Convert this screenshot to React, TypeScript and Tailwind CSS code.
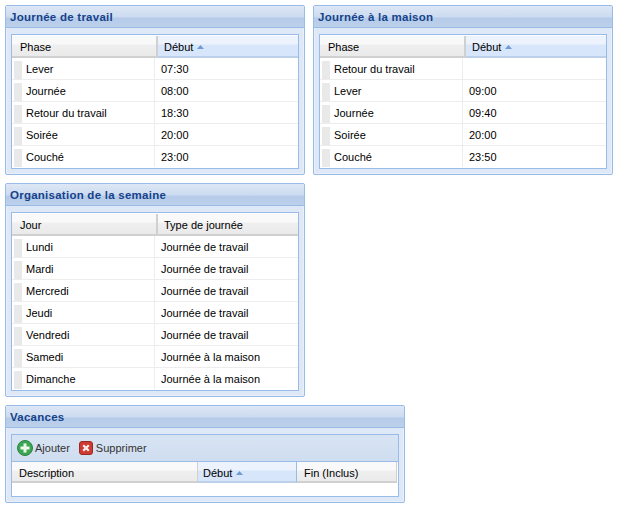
import type { ReactNode } from "react";

interface GridProps {
  head: string[];
  sorted?: number;
  rows: string[][];
}

function Panel({ title, width, children }: { title: string; width: string; children: ReactNode }) {
  return (
    <section className={`${width} rounded-[2px] border border-[#99bbe8] bg-[#dfe8f6] shadow-[inset_0_0_0_1px_#e9f0fb]`}>
      <div className="flex h-[22px] items-center border-b border-[#99bbe8] bg-[linear-gradient(#dde7f5_0px,#ccdbf0_11px,#b5cbe9_12px,#bdd1ec_22px)] pl-[4px] pt-[2px]">
        <h2 className="text-[11.5px] font-bold tracking-[0.25px] text-[#15428b]">{title}</h2>
      </div>
      <div className="p-[5px] pt-[6px]">{children}</div>
    </section>
  );
}

function HeaderCell({ label, active, className }: { label: string; active?: boolean; className: string }) {
  return (
    <div
      className={`flex items-center border-b-2 ${className} ${
        active
          ? "border-b-[#bcd0ea] bg-[linear-gradient(#edf3fd_0px,#edf3fd_8px,#d7e6fa_9px,#d7e6fa_22px)]"
          : "border-b-[#d0d0d0] bg-[linear-gradient(#f9f9f9_0px,#f9f9f9_8px,#efefef_9px,#e9e9e9_22px)]"
      }`}
    >
      <span>{label}</span>
      {active && (
        <svg width="7" height="4" viewBox="0 0 7 4" className="ml-[4px]">
          <path d="M3.5 0 7 4H0z" fill="#6f9bd2" />
        </svg>
      )}
    </div>
  );
}

function Grid({ head, sorted, rows }: GridProps) {
  return (
    <div className="border border-[#99bbe8] bg-white">
      <div className="flex border-t border-white">
        <HeaderCell label={head[0]} className="h-[22px] w-[146px] border-r-2 border-r-[#d0d0d0] pl-[8px] pt-[2px]" />
        <HeaderCell label={head[1]} active={sorted === 1} className="h-[22px] flex-1 pl-[6px] pt-[2px]" />
      </div>
      {rows.map((row) => (
        <div key={row[0]} className="flex h-[22px] border-b border-[#ededed] last:border-b-transparent">
          <div className="flex w-[143px] items-center border-r border-[#ededed] pl-[2px] pt-[2px]">
            <div className="h-[18px] w-[8px] bg-[#e9e9e9]" />
            <span className="ml-[4px]">{row[0]}</span>
          </div>
          <div className="flex items-center pl-[6px] pt-[2px]">{row[1]}</div>
        </div>
      ))}
    </div>
  );
}

function AddIcon() {
  return (
    <svg width="16" height="16" viewBox="0 0 16 16">
      <circle cx="8" cy="8" r="7.5" fill="#3ba651" stroke="#2d8043" />
      <path d="M6.5 3.5h3v3h3v3h-3v3h-3v-3h-3v-3h3z" fill="#eef8ee" />
    </svg>
  );
}

function DeleteIcon() {
  return (
    <svg width="14" height="14" viewBox="0 0 14 14">
      <rect x="0.5" y="0.5" width="13" height="13" rx="2.5" fill="#cf3a30" stroke="#992a22" />
      <path d="M4.2 4.2 9.8 9.8M9.8 4.2 4.2 9.8" stroke="#fdf1ef" strokeWidth="2.2" />
    </svg>
  );
}

const workday = [
  ["Lever", "07:30"],
  ["Journée", "08:00"],
  ["Retour du travail", "18:30"],
  ["Soirée", "20:00"],
  ["Couché", "23:00"],
];

const homeday = [
  ["Retour du travail", ""],
  ["Lever", "09:00"],
  ["Journée", "09:40"],
  ["Soirée", "20:00"],
  ["Couché", "23:50"],
];

const week = [
  ["Lundi", "Journée de travail"],
  ["Mardi", "Journée de travail"],
  ["Mercredi", "Journée de travail"],
  ["Jeudi", "Journée de travail"],
  ["Vendredi", "Journée de travail"],
  ["Samedi", "Journée à la maison"],
  ["Dimanche", "Journée à la maison"],
];

export default function App() {
  return (
    <div className="flex min-h-[508px] w-[620px] flex-col items-start gap-[8px] bg-white p-[5px] font-['Liberation_Sans',Arial,sans-serif] text-[11px] text-black">
      <div className="flex gap-[8px]">
        <Panel title="Journée de travail" width="w-[300px]">
          <Grid head={["Phase", "Début"]} sorted={1} rows={workday} />
        </Panel>
        <Panel title="Journée à la maison" width="w-[300px]">
          <Grid head={["Phase", "Début"]} sorted={1} rows={homeday} />
        </Panel>
      </div>
      <Panel title="Organisation de la semaine" width="w-[300px]">
        <Grid head={["Jour", "Type de journée"]} rows={week} />
      </Panel>
      <Panel title="Vacances" width="w-[400px]">
        <div className="border border-[#99bbe8] bg-white">
          <div className="flex h-[27px] items-center gap-[9px] border-b border-[#99bbe8] bg-[linear-gradient(#d8e4f3,#cfddf0)] pl-[5px] text-[#333]">
            <div className="flex items-center gap-[2px]">
              <AddIcon />
              <span>Ajouter</span>
            </div>
            <div className="flex items-center gap-[3px]">
              <DeleteIcon />
              <span>Supprimer</span>
            </div>
          </div>
          <div className="flex">
            <HeaderCell label="Description" className="h-[21px] w-[186px] border-r border-r-[#d0d0d0] pl-[7px] pt-[3px]" />
            <HeaderCell label="Début" active className="h-[21px] w-[99px] border-r border-r-[#99bbe8] pl-[5px] pt-[3px]" />
            <HeaderCell label="Fin (Inclus)" className="h-[21px] w-[100px] border-r border-r-[#d0d0d0] pl-[7px] pt-[3px]" />
          </div>
          <div className="h-[13px]" />
        </div>
      </Panel>
    </div>
  );
}
